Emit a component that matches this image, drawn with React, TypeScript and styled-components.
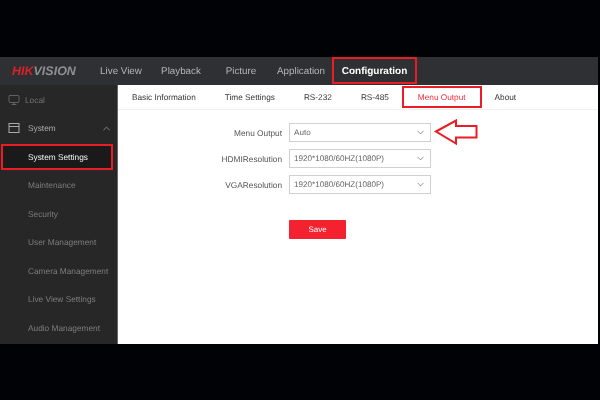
import styled, { createGlobalStyle } from "styled-components";
import { ChevronDown, ChevronUp, Monitor } from "lucide-react";

const navItems = ["Live View", "Playback", "Picture", "Application"];
const tabs = ["Basic Information", "Time Settings", "RS-232", "RS-485", "Menu Output", "About"];
const subItems = [
  "System Settings",
  "Maintenance",
  "Security",
  "User Management",
  "Camera Management",
  "Live View Settings",
  "Audio Management",
];

const App = () => {
  return (
    <>
      <GlobalStyle />
      <Screen>
        <Header>
          <Logo>
            <LogoRed>HIK</LogoRed>VISION
          </Logo>
          <Nav>
            {navItems.map((item) => (
              <NavItem key={item}>{item}</NavItem>
            ))}
            <NavActive>Configuration</NavActive>
          </Nav>
        </Header>
        <Body>
          <Sidebar>
            <LocalItem>
              <Monitor size={12} strokeWidth={1.5} />
              Local
            </LocalItem>
            <SystemItem>
              <WindowIcon viewBox="0 0 12 12">
                <rect x="1" y="1.5" width="10" height="9" fill="none" stroke="currentColor" />
                <path d="M1 4.5h10" stroke="currentColor" />
              </WindowIcon>
              System
              <ChevronSlot>
                <ChevronUp size={11} strokeWidth={1.5} />
              </ChevronSlot>
            </SystemItem>
            {subItems.map((item, index) => (
              <SubItem key={item} $active={index === 0}>
                {item}
              </SubItem>
            ))}
          </Sidebar>
          <Main>
            <Tabs>
              {tabs.map((tab) => (
                <Tab key={tab} $active={tab === "Menu Output"}>
                  {tab}
                </Tab>
              ))}
            </Tabs>
            <Form>
              <Label>Menu Output</Label>
              <SelectRow>
                <Select>
                  Auto
                  <ChevronDown size={11} strokeWidth={1.5} />
                </Select>
                <svg width="44" height="28" viewBox="0 0 44 28">
                  <path
                    d="M2 12.5 L22 1.5 V7 H42.5 V18.5 H22 V24.5 Z"
                    fill="none"
                    stroke="#ea1c24"
                    strokeWidth="2"
                  />
                </svg>
              </SelectRow>
              <Label>HDMIResolution</Label>
              <SelectRow>
                <Select>
                  1920*1080/60HZ(1080P)
                  <ChevronDown size={11} strokeWidth={1.5} />
                </Select>
              </SelectRow>
              <Label>VGAResolution</Label>
              <SelectRow>
                <Select>
                  1920*1080/60HZ(1080P)
                  <ChevronDown size={11} strokeWidth={1.5} />
                </Select>
              </SelectRow>
              <SaveButton>Save</SaveButton>
            </Form>
          </Main>
        </Body>
      </Screen>
    </>
  );
};

const GlobalStyle = createGlobalStyle`
  html, body {
    margin: 0;
    width: 600px;
    height: 400px;
    overflow: hidden;
    background: #010205;
  }
`;

const Screen = styled.div`
  display: flex;
  flex-direction: column;
  width: 598px;
  height: 287px;
  margin-top: 57px;
  font-family: "Liberation Sans", Arial, sans-serif;
  text-rendering: geometricPrecision;
  filter: blur(0.3px);
`;

const Header = styled.div`
  display: flex;
  align-items: stretch;
  height: 28px;
  background: #2e3033;
`;

const Logo = styled.div`
  box-sizing: border-box;
  width: 91px;
  padding-left: 12px;
  font-size: 12.5px;
  line-height: 29px;
  font-weight: bold;
  font-style: italic;
  color: #8f9092;
`;

const LogoRed = styled.span`
  color: #d9202b;
`;

const Nav = styled.div`
  display: flex;
  align-items: flex-start;
`;

const NavItem = styled.div`
  width: 60px;
  font-size: 9.8px;
  line-height: 30px;
  text-align: center;
  color: #b4b5b6;
`;

const NavActive = styled.div`
  box-sizing: border-box;
  width: 85px;
  height: 27px;
  margin-left: 1px;
  border: 2px solid #ea1c24;
  font-size: 10px;
  line-height: 26px;
  font-weight: bold;
  text-align: center;
  color: #fff;
`;

const Body = styled.div`
  display: flex;
  flex: 1;
  min-height: 0;
`;

const Sidebar = styled.div`
  box-sizing: border-box;
  width: 118px;
  background: #272727;
  border-right: 1px solid #666;
  overflow: hidden;
  font-size: 8.3px;
`;

const LocalItem = styled.div`
  display: flex;
  align-items: center;
  gap: 5px;
  height: 29px;
  padding-left: 8px;
  color: #737373;
`;

const SystemItem = styled.div`
  display: flex;
  align-items: center;
  gap: 8px;
  height: 28.5px;
  padding: 0 5px 0 8px;
  color: #ababab;
`;

const WindowIcon = styled.svg`
  width: 12px;
  height: 12px;
`;

const ChevronSlot = styled.span`
  display: flex;
  margin-left: auto;
`;

const SubItem = styled.div<{ $active?: boolean }>`
  box-sizing: border-box;
  width: 112px;
  height: ${(p) => (p.$active ? "26.5px" : "28.5px")};
  margin: ${(p) => (p.$active ? "1px 0 1px 1px" : "0")};
  padding-left: ${(p) => (p.$active ? "25px" : "28px")};
  line-height: ${(p) => (p.$active ? "22.5px" : "28.5px")};
  color: ${(p) => (p.$active ? "#f2f2f2" : "#7d7d7d")};
  background: ${(p) => (p.$active ? "#1a1a1a" : "transparent")};
  border: ${(p) => (p.$active ? "2px solid #ea1c24" : "none")};
  white-space: nowrap;
`;

const Main = styled.div`
  flex: 1;
  min-width: 0;
  background: #fff;
`;

const Tabs = styled.div`
  display: flex;
  align-items: center;
  gap: 29px;
  height: 24px;
  padding-left: 14px;
  border-bottom: 1px solid #f0f0f0;
  font-size: 8.25px;
`;

const Tab = styled.div<{ $active?: boolean }>`
  box-sizing: border-box;
  height: 22px;
  line-height: 19px;
  margin: ${(p) => (p.$active ? "0 -16px" : "0")};
  padding: ${(p) => (p.$active ? "0 14px" : "0")};
  border: 2px solid ${(p) => (p.$active ? "#ea1c24" : "transparent")};
  border-left-width: ${(p) => (p.$active ? "2px" : "0")};
  border-right-width: ${(p) => (p.$active ? "2px" : "0")};
  color: ${(p) => (p.$active ? "#f0303a" : "#333")};
  white-space: nowrap;
`;

const Form = styled.div`
  display: grid;
  grid-template-columns: 164px auto;
  grid-auto-rows: 19px;
  column-gap: 7px;
  row-gap: 7px;
  padding-top: 13px;
`;

const Label = styled.div`
  align-self: center;
  text-align: right;
  font-size: 8.3px;
  color: #555;
`;

const SelectRow = styled.div`
  display: flex;
  align-items: center;
  gap: 3px;
  height: 19px;
`;

const Select = styled.div`
  box-sizing: border-box;
  display: flex;
  align-items: center;
  justify-content: space-between;
  width: 142px;
  height: 19px;
  padding: 0 4px;
  border: 1px solid #d0d0d0;
  font-size: 8.1px;
  color: #666;
`;

const SaveButton = styled.div`
  grid-column: 2;
  width: 57px;
  height: 19px;
  margin-top: 19px;
  background: #f4212e;
  border-radius: 1px;
  color: #fff;
  font-size: 8px;
  line-height: 19px;
  text-align: center;
`;

export default App;
